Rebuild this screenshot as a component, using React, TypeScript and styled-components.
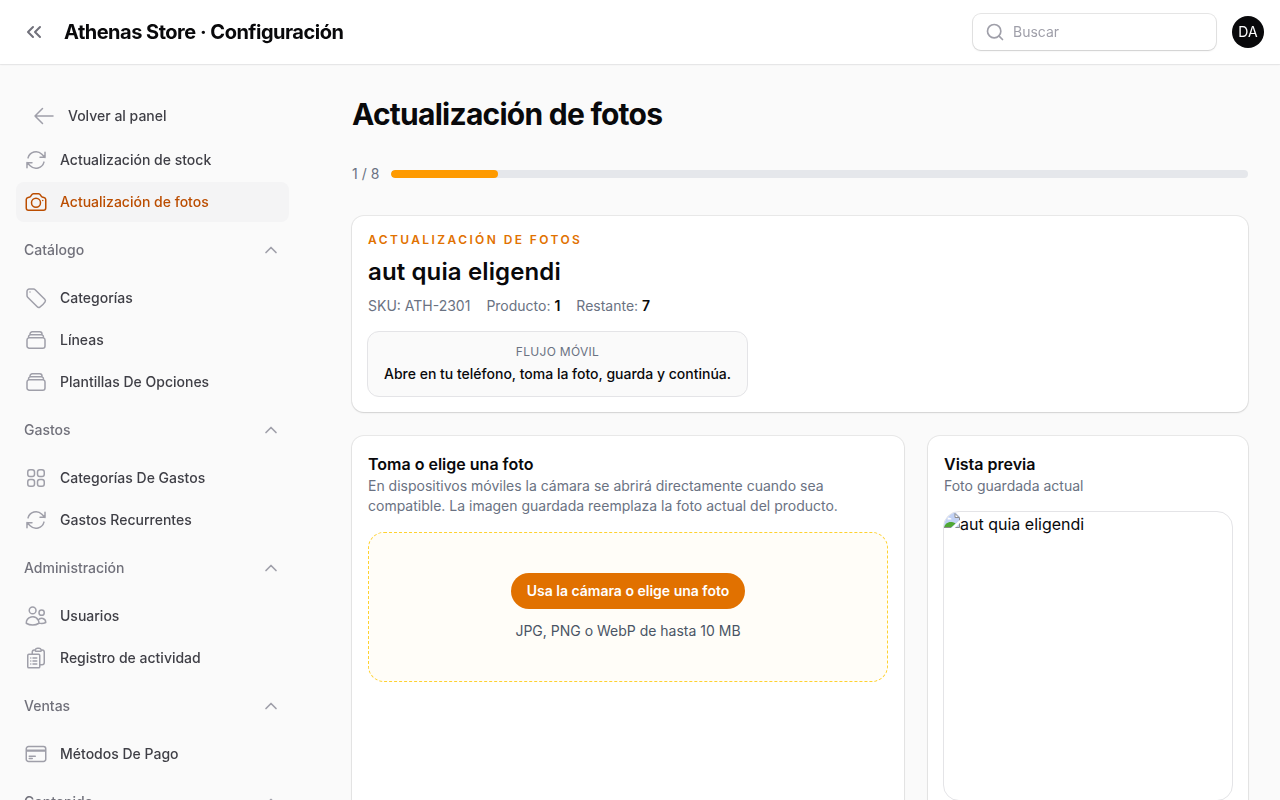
import React from "react";
import styled, { createGlobalStyle, css } from "styled-components";
import { ChevronsLeft, ChevronUp, Search } from "lucide-react";
import {
  HiOutlineArrowLeft,
  HiOutlineArrowPath,
  HiOutlineCamera,
  HiOutlineClipboardDocumentList,
  HiOutlineCreditCard,
  HiOutlineRectangleStack,
  HiOutlineSquares2X2,
  HiOutlineTag,
  HiOutlineUsers,
} from "react-icons/hi2";
import type { IconType } from "react-icons";

const GlobalStyle = createGlobalStyle`
  *, *::before, *::after { box-sizing: border-box; }
  html, body { margin: 0; height: 100%; overflow: hidden; }
  body {
    background: #fafafa;
    color: #09090b;
    font-family: Inter, "Liberation Sans", sans-serif;
    font-size: 16px;
    line-height: 24px;
  }
  h1, h2, h3, p, ul { margin: 0; padding: 0; }
  button { font: inherit; border: 0; background: none; padding: 0; }
`;

const Page = styled.div`
  display: flex;
  flex-direction: column;
  height: 800px;
  overflow: hidden;
`;

const Topbar = styled.header`
  flex: none;
  display: flex;
  align-items: center;
  height: 64px;
  padding: 0 16px;
  background: #fff;
  box-shadow: 0 0 0 1px rgba(9, 9, 11, 0.05), 0 1px 2px rgba(0, 0, 0, 0.05);
  z-index: 1;
`;

const CollapseButton = styled.button`
  display: grid;
  place-items: center;
  width: 36px;
  height: 36px;
  color: #71717b;
`;

const Brand = styled.div`
  margin-left: 12px;
  font-size: 20px;
  line-height: 20px;
  font-weight: 700;
  letter-spacing: -0.5px;
`;

const SearchBox = styled.div`
  display: flex;
  align-items: center;
  gap: 8px;
  width: 243px;
  height: 36px;
  margin-left: auto;
  padding-left: 12px;
  border-radius: 8px;
  background: #fff;
  color: #9f9fa9;
  font-size: 14px;
  box-shadow: 0 0 0 1px rgba(9, 9, 11, 0.1), 0 1px 2px rgba(0, 0, 0, 0.1);
`;

const Avatar = styled.div`
  display: grid;
  place-items: center;
  width: 32px;
  height: 32px;
  margin-left: 16px;
  border-radius: 50%;
  background: #09090b;
  color: #fff;
  font-size: 14px;
`;

const Body = styled.div`
  flex: 1;
  display: flex;
  min-height: 0;
`;

const Sidebar = styled.nav`
  flex: none;
  width: 320px;
  padding: 32px 31px 0 16px;
  overflow: hidden;
  will-change: transform;
`;

const NavList = styled.div`
  display: flex;
  flex-direction: column;
  gap: 2px;
`;

const NavItem = styled.a<{ $active?: boolean; $back?: boolean }>`
  display: flex;
  align-items: center;
  gap: 12px;
  height: 40px;
  padding: 0 8px;
  border-radius: 8px;
  font-size: 14px;
  line-height: 20px;
  font-weight: 500;
  color: ${(p) => (p.$active ? "#bb4d00" : "#3f3f46")};
  background: ${(p) => (p.$active ? "#f4f4f5" : "transparent")};
  svg {
    color: ${(p) => (p.$active ? "#bb4d00" : "#9f9fa9")};
  }
  ${(p) =>
    p.$back &&
    css`
      margin-bottom: 4px;
      padding-left: 16px;
    `}
`;

const NavGroup = styled.section`
  padding-top: 8px;
`;

const GroupHeader = styled.div`
  display: flex;
  align-items: center;
  justify-content: space-between;
  height: 40px;
  margin-bottom: 8px;
  padding: 0 8px;
  font-size: 14px;
  font-weight: 500;
  color: #71717b;
  svg {
    color: #9f9fa9;
  }
`;

const Main = styled.main`
  flex: 1;
  display: flex;
  flex-direction: column;
  min-width: 0;
  padding: 32px 32px 0;
`;

const PageTitle = styled.h1`
  font-size: 30px;
  line-height: 36px;
  font-weight: 700;
  letter-spacing: -0.75px;
`;

const Progress = styled.div`
  display: flex;
  align-items: center;
  gap: 12px;
  margin-top: 32px;
  font-size: 14px;
  line-height: 20px;
  color: #6a7282;
`;

const ProgressTrack = styled.div`
  flex: 1;
  height: 8px;
  border-radius: 4px;
  background: #e5e7eb;
  overflow: hidden;
`;

const ProgressFill = styled.div`
  height: 100%;
  border-radius: 4px;
  background: #fe9a00;
`;

const Card = styled.section`
  padding: 16px;
  border-radius: 12px;
  background: #fff;
  box-shadow: 0 0 0 1px rgba(9, 9, 11, 0.07), 0 1px 2px rgba(0, 0, 0, 0.1);
`;

const ProductCard = styled(Card)`
  height: 196px;
  margin-top: 32px;
`;

const Eyebrow = styled.p`
  font-size: 12px;
  line-height: 16px;
  font-weight: 600;
  letter-spacing: 2.4px;
  text-transform: uppercase;
  color: #e17100;
`;

const ProductName = styled.h2`
  margin-top: 8px;
  font-size: 24px;
  line-height: 32px;
  font-weight: 600;
  letter-spacing: 0.13px;
`;

const Meta = styled.div`
  display: flex;
  gap: 16px;
  margin-top: 8px;
  font-size: 14px;
  line-height: 20px;
  color: #6a7282;
  strong {
    font-weight: 600;
    color: #09090b;
  }
`;

const FlowNote = styled.div`
  width: 381px;
  margin-top: 15px;
  margin-left: -1px;
  padding: 12px 16px;
  border: 1px solid #e4e4e7;
  border-radius: 12px;
  background: #fafafa;
  text-align: center;
  font-size: 14px;
  line-height: 20px;
  font-weight: 500;
  white-space: nowrap;
`;

const FlowLabel = styled.p`
  margin-bottom: 4px;
  font-size: 12px;
  line-height: 16px;
  font-weight: 400;
  letter-spacing: 0.3px;
  text-transform: uppercase;
  color: #6a7282;
`;

const Columns = styled.div`
  flex: 1;
  display: grid;
  grid-template-columns: 552px 320px;
  gap: 24px;
  margin-top: 24px;
`;

const PanelTitle = styled.h3`
  font-size: 16px;
  line-height: 24px;
  font-weight: 600;
`;

const PanelText = styled.p`
  font-size: 14px;
  line-height: 20px;
  color: #6a7282;
`;

const Dropzone = styled.div`
  display: flex;
  flex-direction: column;
  align-items: center;
  height: 150px;
  margin-top: 16px;
  padding-top: 40px;
  border: 1px dashed #ffd230;
  border-radius: 16px;
  background: #fffdf8;
  font-size: 14px;
  line-height: 20px;
  color: #4a5565;
`;

const PickButton = styled.button`
  height: 36px;
  margin-bottom: 12px;
  padding: 0 16px;
  border-radius: 18px;
  background: #e17100;
  color: #fff;
  font-size: 14px;
  font-weight: 600;
`;

const Preview = styled.div`
  display: flex;
  align-items: flex-start;
  width: 290px;
  height: 290px;
  margin: 15px 0 0 -1px;
  border: 1px solid #e4e4e7;
  border-radius: 16px;
  overflow: hidden;
  svg {
    flex: none;
  }
`;

const BrokenImage = () => (
  <svg width="16" height="16" viewBox="0 0 16 16">
    <path d="M0 0h11l5 5v3L8 16H0z" fill="#c2d2f5" />
    <path d="M3.500 7c0-1.500 1.500-2 2.500-1 1.500 0 2 1.500 1 1.500H3.500z" fill="#fff" />
    <path d="M0 15.500c1-4.500 6-7.500 11.500-4L7 15.500z" fill="#4fa834" />
    <path d="M0 15.500h7" stroke="#8c8c8c" />
    <path d="M11 1.500v4h4z" fill="#fff" stroke="#8c8c8c" />
    <path d="M15.500 5.500v3" stroke="#8c8c8c" />
    <path d="M16 8v2.500L10.500 16H7.500z" fill="#fff" />
    <path d="M16 11v5h-5z" fill="#c2d2f5" />
    <path d="M11.500 15.500h4v-4" fill="none" stroke="#8c8c8c" />
  </svg>
);

type Item = { label: string; icon: IconType; active?: boolean };

const topItems: Item[] = [
  { label: "Actualización de stock", icon: HiOutlineArrowPath },
  { label: "Actualización de fotos", icon: HiOutlineCamera, active: true },
];

const groups: { title: string; items: Item[] }[] = [
  {
    title: "Catálogo",
    items: [
      { label: "Categorías", icon: HiOutlineTag },
      { label: "Líneas", icon: HiOutlineRectangleStack },
      { label: "Plantillas De Opciones", icon: HiOutlineRectangleStack },
    ],
  },
  {
    title: "Gastos",
    items: [
      { label: "Categorías De Gastos", icon: HiOutlineSquares2X2 },
      { label: "Gastos Recurrentes", icon: HiOutlineArrowPath },
    ],
  },
  {
    title: "Administración",
    items: [
      { label: "Usuarios", icon: HiOutlineUsers },
      { label: "Registro de actividad", icon: HiOutlineClipboardDocumentList },
    ],
  },
  { title: "Ventas", items: [{ label: "Métodos De Pago", icon: HiOutlineCreditCard }] },
  { title: "Contenido", items: [] },
];

const NavItems = ({ items }: { items: Item[] }) => (
  <NavList>
    {items.map(({ label, icon: Icon, active }) => (
      <NavItem key={label} $active={active}>
        <Icon size={24} />
        {label}
      </NavItem>
    ))}
  </NavList>
);

export default function App() {
  const done = 1;
  const total = 8;
  return (
    <Page>
      <GlobalStyle />
      <Topbar>
        <CollapseButton aria-label="Contraer">
          <ChevronsLeft size={24} strokeWidth={2} />
        </CollapseButton>
        <Brand>Athenas Store · Configuración</Brand>
        <SearchBox>
          <Search size={20} />
          Buscar
        </SearchBox>
        <Avatar>DA</Avatar>
      </Topbar>
      <Body>
        <Sidebar>
          <NavItem $back>
            <HiOutlineArrowLeft size={24} />
            Volver al panel
          </NavItem>
          <NavItems items={topItems} />
          {groups.map((g) => (
            <NavGroup key={g.title}>
              <GroupHeader>
                {g.title}
                <ChevronUp size={20} />
              </GroupHeader>
              <NavItems items={g.items} />
            </NavGroup>
          ))}
        </Sidebar>
        <Main>
          <PageTitle>Actualización de fotos</PageTitle>
          <Progress>
            <span>
              {done} / {total}
            </span>
            <ProgressTrack>
              <ProgressFill style={{ width: `${(done / total) * 100}%` }} />
            </ProgressTrack>
          </Progress>
          <ProductCard>
            <Eyebrow>Actualización de fotos</Eyebrow>
            <ProductName>aut quia eligendi</ProductName>
            <Meta>
              <span>SKU: ATH-2301</span>
              <span>
                Producto: <strong>1</strong>
              </span>
              <span>
                Restante: <strong>7</strong>
              </span>
            </Meta>
            <FlowNote>
              <FlowLabel>Flujo móvil</FlowLabel>
              Abre en tu teléfono, toma la foto, guarda y continúa.
            </FlowNote>
          </ProductCard>
          <Columns>
            <Card>
              <PanelTitle>Toma o elige una foto</PanelTitle>
              <PanelText>
                En dispositivos móviles la cámara se abrirá directamente cuando sea compatible. La imagen guardada
                reemplaza la foto actual del producto.
              </PanelText>
              <Dropzone>
                <PickButton>Usa la cámara o elige una foto</PickButton>
                JPG, PNG o WebP de hasta 10 MB
              </Dropzone>
            </Card>
            <Card>
              <PanelTitle>Vista previa</PanelTitle>
              <PanelText>Foto guardada actual</PanelText>
              <Preview>
                <BrokenImage />
                aut quia eligendi
              </Preview>
            </Card>
          </Columns>
        </Main>
      </Body>
    </Page>
  );
}
